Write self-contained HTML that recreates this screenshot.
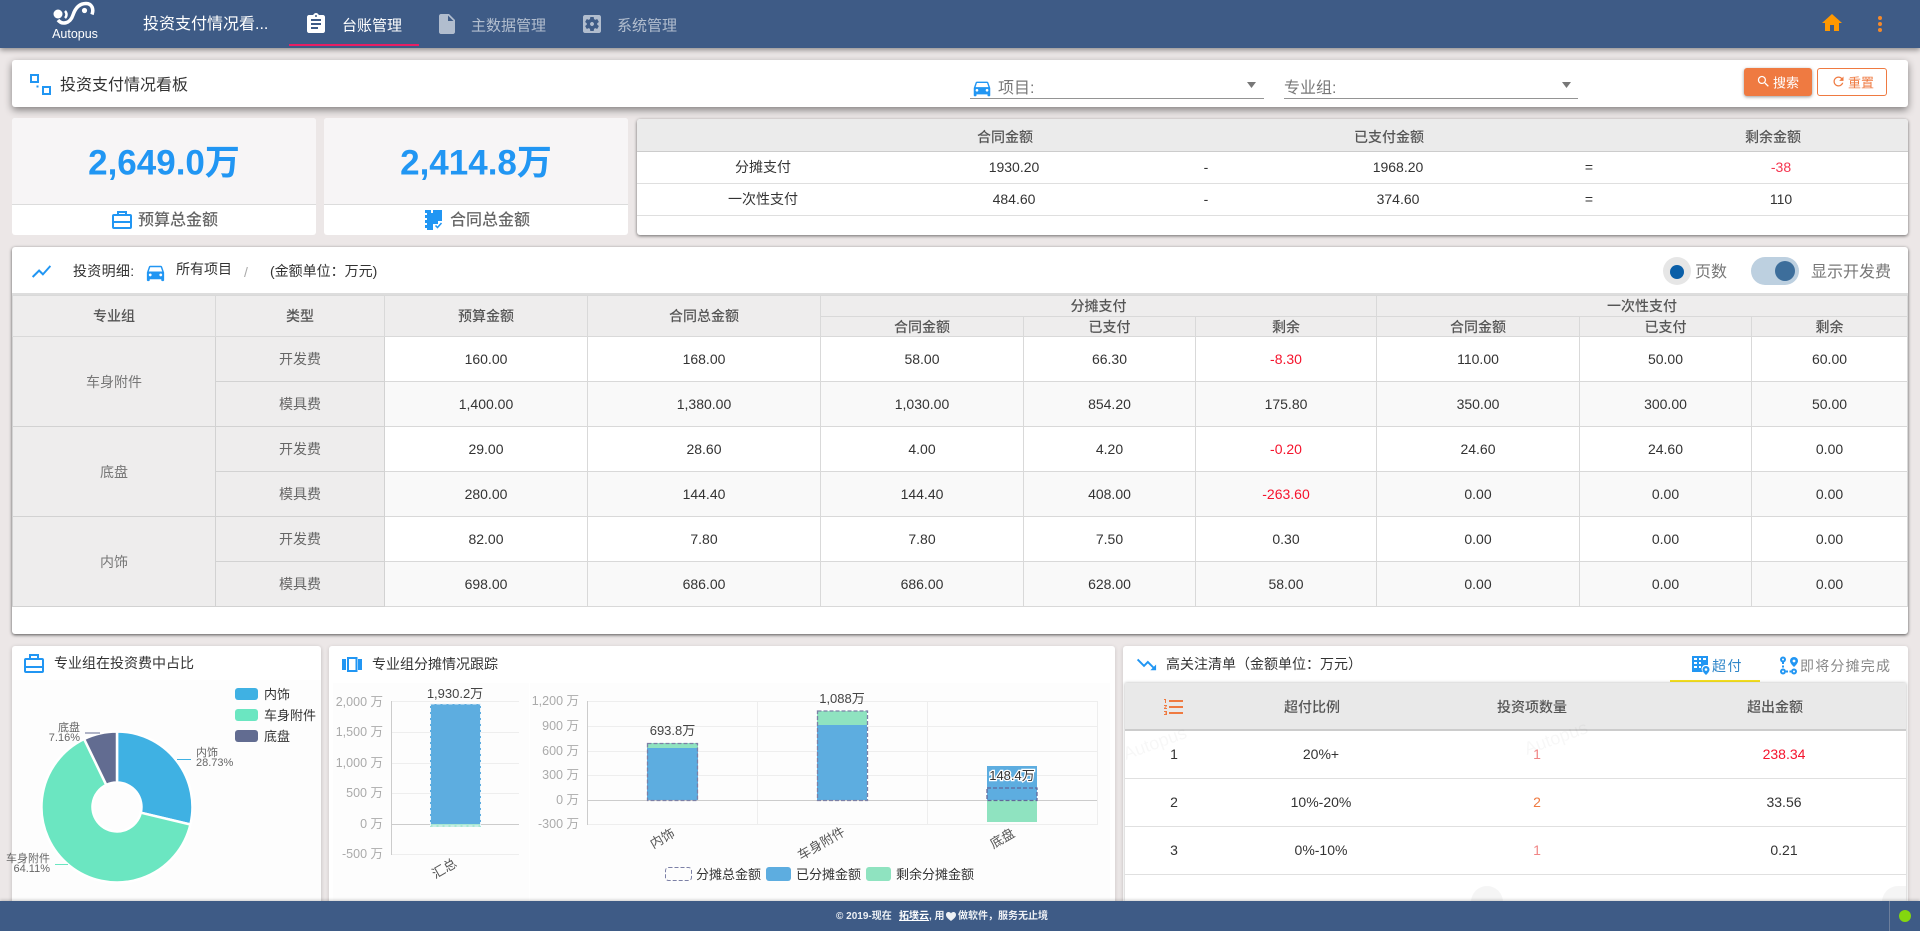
<!DOCTYPE html>
<html lang="zh-CN">
<head>
<meta charset="utf-8">
<title>投资支付情况看板</title>
<style>
*{box-sizing:border-box}
html,body{margin:0;padding:0;width:1920px;height:931px;overflow:hidden;background:#ece7e7;font-family:"Liberation Sans","Noto Sans CJK SC",sans-serif;font-size:14px;color:#333}
.a{position:absolute}
.c{position:absolute;white-space:nowrap;transform:translate(-50%,-50%);line-height:1}
.l{position:absolute;white-space:nowrap;transform:translateY(-50%);line-height:1}
.panel{position:absolute;background:#fff;border-radius:3px}
.h{font-weight:500;color:#555}
svg{position:absolute;display:block}
table{border-collapse:collapse;table-layout:fixed;position:absolute}
#m{left:12px;top:295px;width:1895px}
#m th,#m td{border:1px solid #d9d9d9;padding:0;text-align:center;font-size:14px;font-weight:400}
#m th{background:#eeeded;color:#555;font-weight:500;height:21px;line-height:14px}
#m tr.s th{height:20px}
#m td{color:#333;height:45px}
#m tr.e td{background:#f9f9f9}
#m td.g{background:#eeeded;color:#777;border-color:#d2d2d2}
#m tr.e td.g,#m td.g{background:#eeeded}
#m td.ty{background:#eeeded;color:#666;border-color:#d2d2d2}
#m tr.e td.ty{background:#eeeded}
#m td.r{color:#f5142d}
</style>
</head>
<body>

<!-- top bar -->
<div class="a" style="left:0;top:0;width:1920px;height:48px;background:#3e5b86;box-shadow:0 2px 5px rgba(0,0,0,.4);z-index:3">
  <svg style="left:45px;top:0" width="60" height="30" viewBox="0 0 60 30" fill="none">
    <circle cx="13" cy="14" r="4.500" fill="#fff"/>
    <path d="M20 11C22 13 22 16 20 18" stroke="#fff" stroke-width="2.500"/>
    <path d="M13 20C17 25 25 24 28 15C30 9 34 3.500 41 3.500C47 3.500 49 9 47 14.500" stroke="#fff" stroke-width="3.500"/>
    <circle cx="39.500" cy="10.500" r="2.600" fill="#fff"/>
  </svg>
  <div class="c" style="left:75px;top:34px;color:#fff;font-size:12.500px">Autopus</div>
  <div class="l" style="left:143px;top:25px;color:#fff;font-size:16px">投资支付情况看...</div>
  <svg style="left:304px;top:12px" width="24" height="24" viewBox="0 0 24 24" fill="#fff"><path d="M19 3h-4.180C14.400 1.840 13.300 1 12 1c-1.300 0-2.400.84-2.820 2H5c-1.100 0-2 .9-2 2v14c0 1.100.9 2 2 2h14c1.100 0 2-.9 2-2V5c0-1.100-.9-2-2-2zm-7 0c.55 0 1 .45 1 1s-.45 1-1 1-1-.45-1-1 .45-1 1-1zm2 14H7v-2h7v2zm3-4H7v-2h10v2zm0-4H7V7h10v2z"/></svg>
  <div class="l" style="left:342px;top:26px;color:#fff;font-size:15px">台账管理</div>
  <div class="a" style="left:289px;top:44px;width:130px;height:2px;background:#e91e63"></div>
  <svg style="left:435px;top:12px" width="24" height="24" viewBox="0 0 24 24" fill="#fff" fill-opacity=".6"><path d="M6 2c-1.100 0-1.990.9-1.990 2L4 20c0 1.100.89 2 1.990 2H18c1.100 0 2-.9 2-2V8l-6-6H6zm7 7V3.500L18.500 9H13z"/></svg>
  <div class="l" style="left:471px;top:26px;color:rgba(255,255,255,.6);font-size:15px">主数据管理</div>
  <svg style="left:580px;top:12px" width="24" height="24" viewBox="0 0 24 24" fill="#fff" fill-opacity=".6"><path d="M12 10c-1.100 0-2 .9-2 2s.9 2 2 2 2-.9 2-2-.9-2-2-2zm7-7H5c-1.110 0-2 .9-2 2v14c0 1.100.89 2 2 2h14c1.110 0 2-.9 2-2V5c0-1.100-.89-2-2-2zm-1.750 9c0 .23-.02.46-.05.68l1.480 1.160c.13.11.17.3.08.45l-1.400 2.420c-.09.15-.27.21-.43.15l-1.740-.7c-.36.28-.76.51-1.180.69l-.26 1.850c-.03.17-.18.3-.35.3h-2.800c-.17 0-.32-.13-.35-.29l-.26-1.850c-.43-.18-.82-.41-1.180-.69l-1.740.7c-.16.06-.34 0-.43-.15l-1.400-2.420c-.09-.15-.05-.34.08-.45l1.480-1.160c-.03-.23-.05-.46-.05-.69 0-.23.02-.46.05-.68l-1.480-1.160c-.13-.11-.17-.3-.08-.45l1.400-2.420c.09-.15.27-.21.43-.15l1.740.7c.36-.28.76-.51 1.180-.69l.26-1.850c.03-.17.18-.3.35-.3h2.800c.17 0 .32.13.35.29l.26 1.850c.43.18.82.41 1.180.69l1.740-.7c.16-.06.34 0 .43.15l1.400 2.420c.09.15.05.34-.08.45l-1.480 1.160c.03.23.05.46.05.69z"/></svg>
  <div class="l" style="left:617px;top:26px;color:rgba(255,255,255,.6);font-size:15px">系统管理</div>
  <svg style="left:1820px;top:11px" width="24" height="24" viewBox="0 0 24 24" fill="#ff9800"><path d="M10 20v-6h4v6h5v-8h3L12 3 2 12h3v8z"/></svg>
  <svg style="left:1874px;top:12px" width="12" height="24" viewBox="0 0 12 24" fill="#f5892a"><circle cx="6" cy="6" r="2"/><circle cx="6" cy="12" r="2"/><circle cx="6" cy="18" r="2"/></svg>
</div>

<!-- search panel -->
<div class="panel" style="left:12px;top:60px;width:1896px;height:47px;box-shadow:0 3px 8px rgba(0,0,0,.45)"></div>
<svg style="left:30px;top:74px" width="21" height="21" viewBox="0 0 21 21" fill="none" stroke="#2196f3" stroke-width="2"><rect x="1" y="1" width="7" height="7"/><rect x="13" y="13" width="7" height="7"/><rect x="6.500" y="11.500" width="2" height="2" fill="#2196f3" stroke="none"/></svg>
<div class="l" style="left:60px;top:86px;font-size:16px;color:#333">投资支付情况看板</div>

<svg style="left:971px;top:77px" width="22" height="22" viewBox="0 0 24 24" fill="#2196f3"><path d="M18.920 6.010C18.720 5.420 18.160 5 17.500 5h-11c-.66 0-1.210.42-1.420 1.010L3 12v8c0 .55.45 1 1 1h1c.55 0 1-.45 1-1v-1h12v1c0 .55.45 1 1 1h1c.55 0 1-.45 1-1v-8l-2.080-5.990zM6.500 16c-.83 0-1.500-.67-1.500-1.500S5.670 13 6.500 13s1.500.67 1.500 1.500S7.330 16 6.500 16zm11 0c-.83 0-1.500-.67-1.500-1.500s.67-1.500 1.500-1.500 1.500.67 1.500 1.500-.67 1.500-1.500 1.500zM5 11l1.500-4.500h11L19 11H5z"/></svg>
<div class="l" style="left:998px;top:89px;font-size:16px;color:#777">项目:</div>
<div class="a" style="left:970px;top:98px;width:294px;height:1px;background:#949494"></div>
<svg style="left:1247px;top:82px" width="9" height="6" viewBox="0 0 9 6" fill="#777"><path d="M0 0h9L4.500 6z"/></svg>
<div class="l" style="left:1284px;top:89px;font-size:16px;color:#777">专业组:</div>
<div class="a" style="left:1284px;top:98px;width:294px;height:1px;background:#949494"></div>
<svg style="left:1562px;top:82px" width="9" height="6" viewBox="0 0 9 6" fill="#777"><path d="M0 0h9L4.500 6z"/></svg>

<div class="a" style="left:1744px;top:68px;width:68px;height:28px;background:#ef7a41;border-radius:3px;box-shadow:0 1px 3px rgba(0,0,0,.4)"></div>
<svg style="left:1756px;top:74px" width="15" height="15" viewBox="0 0 24 24" fill="#fff"><path d="M15.500 14h-.79l-.28-.27C15.410 12.590 16 11.110 16 9.500 16 5.910 13.090 3 9.500 3S3 5.910 3 9.500 5.910 16 9.500 16c1.610 0 3.090-.59 4.230-1.570l.27.28v.79l5 4.990L20.490 19l-4.990-5zm-6 0C7.010 14 5 11.990 5 9.500S7.010 5 9.500 5 14 7.010 14 9.500 11.990 14 9.500 14z"/></svg>
<div class="l" style="left:1773px;top:83px;font-size:13px;color:#fff">搜索</div>
<div class="a" style="left:1817px;top:68px;width:70px;height:28px;background:#fff;border:1px solid #ef7a41;border-radius:3px"></div>
<svg style="left:1831px;top:74px" width="15" height="15" viewBox="0 0 24 24" fill="#ef7a41"><path d="M17.650 6.350C16.200 4.900 14.210 4 12 4c-4.420 0-7.990 3.580-7.990 8s3.570 8 7.990 8c3.730 0 6.840-2.550 7.730-6h-2.080c-.82 2.330-3.040 4-5.650 4-3.310 0-6-2.690-6-6s2.690-6 6-6c1.660 0 3.140.69 4.220 1.780L13 11h7V4l-2.350 2.350z"/></svg>
<div class="l" style="left:1848px;top:83px;font-size:13px;color:#ef7a41">重置</div>

<!-- stat cards -->
<div class="panel" style="left:12px;top:118px;width:304px;height:117px;background:#fff;overflow:hidden"><div style="height:87px;background:#f7f5f6;border-bottom:1px solid #dcdcdc"></div></div>
<div class="c" style="left:164px;top:163px;font-size:35px;font-weight:700;color:#2196f3">2,649.0万</div>
<svg style="left:111px;top:210px" width="22" height="19" viewBox="0 0 22 19" fill="none" stroke="#2196f3" stroke-width="2"><rect x="2" y="5" width="18" height="13" rx="1"/><path d="M7 5V2h8v3M2 12h18"/></svg>
<div class="l h" style="left:138px;top:221px;font-size:16px;color:#666">预算总金额</div>

<div class="panel" style="left:324px;top:118px;width:304px;height:117px;background:#fff;overflow:hidden"><div style="height:87px;background:#f7f5f6;border-bottom:1px solid #dcdcdc"></div></div>
<div class="c" style="left:476px;top:163px;font-size:35px;font-weight:700;color:#2196f3">2,414.8万</div>
<svg style="left:424px;top:210px" width="21" height="20" viewBox="0 0 21 20" fill="#2196f3"><path d="M3 0h4v3h2V0h9v11h-4v3H9v6H3v-2H1v-3h2v-2H1v-3h2V8H1V5h2V3H1V0z"/><path d="M11.500 15.500l2 2 4-4.500" stroke="#2196f3" stroke-width="1.500" fill="none"/></svg>
<div class="l h" style="left:450px;top:221px;font-size:16px;color:#666">合同总金额</div>

<!-- summary table -->
<div class="panel" style="left:637px;top:119px;width:1271px;height:116px;box-shadow:0 1px 3px rgba(0,0,0,.55);overflow:hidden">
  <div class="a" style="left:0;top:0;width:100%;height:33px;background:#ebebeb;border-bottom:1px solid #ccc"></div>
  <div class="a" style="left:0;top:64px;width:100%;height:1px;background:#dfdfdf"></div>
  <div class="a" style="left:0;top:96px;width:100%;height:1px;background:#dfdfdf"></div>
</div>
<div class="c h" style="left:1005px;top:137px">合同金额</div>
<div class="c h" style="left:1389px;top:137px">已支付金额</div>
<div class="c h" style="left:1773px;top:137px">剩余金额</div>
<div class="c" style="left:763px;top:167px">分摊支付</div>
<div class="c" style="left:1014px;top:167px">1930.20</div>
<div class="c" style="left:1206px;top:167px">-</div>
<div class="c" style="left:1398px;top:167px">1968.20</div>
<div class="c" style="left:1589px;top:167px">=</div>
<div class="c" style="left:1781px;top:167px;color:#f5344f">-38</div>
<div class="c" style="left:763px;top:199px">一次性支付</div>
<div class="c" style="left:1014px;top:199px">484.60</div>
<div class="c" style="left:1206px;top:199px">-</div>
<div class="c" style="left:1398px;top:199px">374.60</div>
<div class="c" style="left:1589px;top:199px">=</div>
<div class="c" style="left:1781px;top:199px">110</div>

<!-- main panel -->
<div class="panel" style="left:12px;top:247px;width:1896px;height:387px;box-shadow:0 1px 3px rgba(0,0,0,.65)"></div>
<div class="a" style="left:12px;top:293px;width:1896px;height:2px;background:#ddd"></div>
<svg style="left:30px;top:260px" width="23" height="23" viewBox="0 0 24 24" fill="#2196f3"><path d="M3.500 18.490l6-6.010 4 4L22 6.920l-1.410-1.410-7.090 7.970-4-4L2 16.990z"/></svg>
<div class="l" style="left:73px;top:271px;letter-spacing:.3px">投资明细:</div>
<svg style="left:144px;top:261px" width="23" height="23" viewBox="0 0 24 24" fill="#2196f3"><path d="M18.920 6.010C18.720 5.420 18.160 5 17.500 5h-11c-.66 0-1.210.42-1.420 1.010L3 12v8c0 .55.45 1 1 1h1c.55 0 1-.45 1-1v-1h12v1c0 .55.45 1 1 1h1c.55 0 1-.45 1-1v-8l-2.080-5.990zM6.500 16c-.83 0-1.500-.67-1.500-1.500S5.670 13 6.500 13s1.500.67 1.500 1.500S7.330 16 6.500 16zm11 0c-.83 0-1.500-.67-1.500-1.500s.67-1.500 1.500-1.500 1.500.67 1.500 1.500-.67 1.500-1.500 1.500zM5 11l1.500-4.500h11L19 11H5z"/></svg>
<div class="l" style="left:176px;top:269px">所有项目</div>
<div class="l" style="left:244px;top:272px;color:#aaa">/</div>
<div class="l" style="left:270px;top:271px">(金额单位：万元)</div>
<div class="a" style="left:1663px;top:257px;width:28px;height:28px;border-radius:50%;background:#e6e6e6"></div>
<div class="a" style="left:1670px;top:265px;width:14px;height:14px;border-radius:50%;background:#0a5fa8"></div>
<div class="l" style="left:1695px;top:273px;font-size:16px;color:#777">页数</div>
<div class="a" style="left:1751px;top:257px;width:48px;height:28px;border-radius:14px;background:#bdd0e0"></div>
<div class="a" style="left:1775px;top:261px;width:20px;height:20px;border-radius:50%;background:#3d6e9b"></div>
<div class="l" style="left:1811px;top:273px;font-size:16px;color:#777">显示开发费</div>

<table id="m">
<colgroup><col style="width:203px"><col style="width:169px"><col style="width:203px"><col style="width:233px"><col style="width:203px"><col style="width:172px"><col style="width:181px"><col style="width:203px"><col style="width:172px"><col style="width:156px"></colgroup>
<tr><th rowspan="2">专业组</th><th rowspan="2">类型</th><th rowspan="2">预算金额</th><th rowspan="2">合同总金额</th><th colspan="3">分摊支付</th><th colspan="3">一次性支付</th></tr>
<tr class="s"><th>合同金额</th><th>已支付</th><th>剩余</th><th>合同金额</th><th>已支付</th><th>剩余</th></tr>
<tr><td class="g" rowspan="2">车身附件</td><td class="ty">开发费</td><td>160.00</td><td>168.00</td><td>58.00</td><td>66.30</td><td class="r">-8.30</td><td>110.00</td><td>50.00</td><td>60.00</td></tr>
<tr class="e"><td class="ty">模具费</td><td>1,400.00</td><td>1,380.00</td><td>1,030.00</td><td>854.20</td><td>175.80</td><td>350.00</td><td>300.00</td><td>50.00</td></tr>
<tr><td class="g" rowspan="2">底盘</td><td class="ty">开发费</td><td>29.00</td><td>28.60</td><td>4.00</td><td>4.20</td><td class="r">-0.20</td><td>24.60</td><td>24.60</td><td>0.00</td></tr>
<tr class="e"><td class="ty">模具费</td><td>280.00</td><td>144.40</td><td>144.40</td><td>408.00</td><td class="r">-263.60</td><td>0.00</td><td>0.00</td><td>0.00</td></tr>
<tr><td class="g" rowspan="2">内饰</td><td class="ty">开发费</td><td>82.00</td><td>7.80</td><td>7.80</td><td>7.50</td><td>0.30</td><td>0.00</td><td>0.00</td><td>0.00</td></tr>
<tr class="e"><td class="ty" style="height:45px">模具费</td><td>698.00</td><td>686.00</td><td>686.00</td><td>628.00</td><td>58.00</td><td>0.00</td><td>0.00</td><td>0.00</td></tr>
</table>

<!-- bottom panels -->
<div class="panel" style="left:12px;top:646px;width:309px;height:270px;box-shadow:0 1px 4px rgba(0,0,0,.2)"></div>
<div class="panel" style="left:329px;top:646px;width:786px;height:270px;box-shadow:0 1px 4px rgba(0,0,0,.15)"></div>
<div class="panel" style="left:1123px;top:646px;width:785px;height:270px;box-shadow:0 1px 4px rgba(0,0,0,.15)"></div>

<div class="a" style="left:12px;top:680px;width:309px;height:221px;background:#fdfdfd"></div>
<div class="a" style="left:333px;top:683px;width:196px;height:218px;background:#fdfdfd"></div>
<div class="a" style="left:530px;top:683px;width:580px;height:218px;background:#fdfdfd"></div>

<svg style="left:23px;top:653px" width="22" height="20" viewBox="0 0 22 20" fill="none" stroke="#2196f3" stroke-width="2"><rect x="2" y="6" width="18" height="13" rx="1"/><path d="M7 6V2h8v4M2 14h18"/></svg>
<div class="l" style="left:54px;top:663px;color:#333">专业组在投资费中占比</div>

<svg style="left:342px;top:657px" width="20" height="15" viewBox="0 0 20 15" fill="#2196f3"><rect x="0" y="2" width="4" height="11"/><rect x="16" y="2" width="4" height="11"/><rect x="6" y="1" width="8.500" height="13" fill="none" stroke="#2196f3" stroke-width="2"/></svg>
<div class="l" style="left:372px;top:664px;color:#333">专业组分摊情况跟踪</div>

<svg style="left:0;top:0" width="1920" height="931" viewBox="0 0 1920 931" font-family="'Liberation Sans','Noto Sans CJK SC',sans-serif">
  <!-- pie -->
  <g stroke="#fff" stroke-width="2.500" stroke-linejoin="round">
    <path fill="#3fb1e3" d="M117 731.500A75.500 75.500 0 0 1 190.400 824.500L140.800 812.700A24.500 24.500 0 0 0 117 782.500Z"/>
    <path fill="#6be6c1" d="M190.400 824.500A75.500 75.500 0 1 1 84.100 739L106.300 784.900A24.500 24.500 0 1 0 140.800 812.700Z"/>
    <path fill="#626c91" d="M84.100 739A75.500 75.500 0 0 1 117 731.500L117 782.500A24.500 24.500 0 0 0 106.300 784.900Z"/>
  </g>
  <path d="M177 759.500h14" stroke="#3fb1e3"/>
  <path d="M85 733h15" stroke="#626c91"/>
  <path d="M55 864.500h13" stroke="#6be6c1"/>
  <g font-size="11" fill="#666">
    <text x="196" y="756">内饰</text><text x="196" y="766">28.73%</text>
    <text x="80" y="731" text-anchor="end">底盘</text><text x="80" y="741" text-anchor="end">7.16%</text>
    <text x="50" y="862" text-anchor="end">车身附件</text><text x="50" y="872" text-anchor="end">64.11%</text>
  </g>
  <rect x="235" y="688" width="23" height="12" rx="3" fill="#3fb1e3"/>
  <rect x="235" y="709" width="23" height="12" rx="3" fill="#6be6c1"/>
  <rect x="235" y="730" width="23" height="12" rx="3" fill="#626c91"/>
  <g font-size="13" fill="#333">
    <text x="264" y="699">内饰</text><text x="264" y="720">车身附件</text><text x="264" y="741">底盘</text>
  </g>

  <!-- left bar chart -->
  <g stroke="#eee" fill="none">
    <path d="M391 701.500h128M391 732.500h128M391 763.500h128M391 793.500h128M391 854.500h128"/>
  </g>
  <path d="M391.500 701v154M391 824.500h128" stroke="#ccc" fill="none"/>
  <g font-size="12.500" fill="#aaa" text-anchor="end">
    <text x="383" y="706">2,000 万</text><text x="383" y="736">1,500 万</text><text x="383" y="767">1,000 万</text><text x="383" y="797">500 万</text><text x="383" y="828">0 万</text><text x="383" y="858">-500 万</text>
  </g>
  <rect x="430" y="704" width="51" height="120" fill="#5dade0"/>
  <rect x="430" y="824" width="51" height="3" fill="#a8e8d2"/>
  <rect x="430.500" y="704" width="50" height="122" fill="none" stroke="#e8f3fb" stroke-dasharray="4 2"/>
  <text x="455" y="698" text-anchor="middle" font-size="13" fill="#444">1,930.2万</text>
  <text x="444" y="873" text-anchor="middle" font-size="13" fill="#555" transform="rotate(-30 444 868)">汇总</text>

  <!-- right bar chart -->
  <path d="M587 701.500h510M587 726.500h510M587 751.500h510M587 775.500h510M587 824.500h510M757.500 701v124M927.500 701v124M1097.500 701v124" stroke="#eee" fill="none"/>
  <path d="M587.500 701v124M587 800.500h510" stroke="#ccc" fill="none"/>
  <g font-size="12.500" fill="#aaa" text-anchor="end">
    <text x="579" y="705">1,200 万</text><text x="579" y="730">900 万</text><text x="579" y="755">600 万</text><text x="579" y="779">300 万</text><text x="579" y="804">0 万</text><text x="579" y="828">-300 万</text>
  </g>
  <rect x="647" y="748" width="51" height="52" fill="#5dade0"/>
  <rect x="647" y="743" width="51" height="5" fill="#8fe3c0"/>
  <rect x="647.500" y="743.500" width="50" height="57" fill="none" stroke="#7c80a6" stroke-width="1.300" stroke-dasharray="4 2"/>
  <text x="672.500" y="735" text-anchor="middle" font-size="13" fill="#444">693.8万</text>
  <rect x="817" y="725" width="50" height="75" fill="#5dade0"/>
  <rect x="817" y="711" width="50" height="14" fill="#8fe3c0"/>
  <rect x="817.500" y="711" width="50" height="89.500" fill="none" stroke="#7c80a6" stroke-width="1.300" stroke-dasharray="4 2"/>
  <text x="842" y="703" text-anchor="middle" font-size="13" fill="#444">1,088万</text>
  <rect x="987" y="766" width="50" height="34" fill="#5dade0"/>
  <rect x="987" y="800" width="50" height="22" fill="#8fe3c0"/>
  <rect x="987" y="788" width="50" height="12.500" fill="none" stroke="#62679a" stroke-width="1.300" stroke-dasharray="4 2"/>
  <text x="1012" y="780" text-anchor="middle" font-size="13" fill="#333" stroke="#fff" stroke-width="2.500" paint-order="stroke">148.4万</text>
  <g font-size="13" fill="#555" text-anchor="middle">
    <text x="662" y="843" transform="rotate(-30 662 838)">内饰</text>
    <text x="821" y="848" transform="rotate(-30 821 843)">车身附件</text>
    <text x="1002" y="843" transform="rotate(-30 1002 838)">底盘</text>
  </g>
  <rect x="665.500" y="867.500" width="26" height="13" rx="3" fill="none" stroke="#7c80a6" stroke-dasharray="4 2"/>
  <rect x="766" y="867" width="25" height="14" rx="3" fill="#5dade0"/>
  <rect x="866" y="867" width="25" height="14" rx="3" fill="#8fe3c0"/>
  <g font-size="13" fill="#333">
    <text x="696" y="879">分摊总金额</text><text x="796" y="879">已分摊金额</text><text x="896" y="879">剩余分摊金额</text>
  </g>
</svg>

<!-- high attention -->
<svg style="left:1135px;top:653px" width="23" height="23" viewBox="0 0 24 24" fill="#2196f3"><path d="M16 18l2.290-2.290-4.880-4.880-4 4L2 7.410 3.410 6l6 6 4-4 6.300 6.290L22 12v6z"/></svg>
<div class="l" style="left:1166px;top:664px;color:#333">高关注清单（金额单位：万元）</div>
<svg style="left:1692px;top:656px" width="19" height="19" viewBox="0 0 19 19" fill="#2196f3"><path d="M0 0h16v9h-2a4 4 0 0 0-3 7H0zM2 2v2h3V2zm5 0v2h2V2zm4 0v2h3V2zM2 6v2h3V6zm5 0v2h2V6zM2 10v2h3v-2zm5 0v2h2v-2z" fill-rule="evenodd"/><path d="M14 10a3.500 3.500 0 0 1 3.500 3.500C17.500 16 14 19 14 19s-3.500-3-3.500-5.500A3.500 3.500 0 0 1 14 10z"/><circle cx="14" cy="13.500" r="1.300" fill="#fff"/></svg>
<div class="l" style="left:1712px;top:666px;color:#2f86c9;letter-spacing:1.500px">超付</div>
<div class="a" style="left:1670px;top:680px;width:90px;height:2px;background:#f5e020"></div>
<svg style="left:1779px;top:656px" width="20" height="19" viewBox="0 0 20 19" fill="none" stroke="#2196f3" stroke-width="2"><circle cx="4" cy="3.500" r="2"/><circle cx="4" cy="15.500" r="2"/><circle cx="15" cy="15.500" r="2"/><path d="M4 6v7M7 15.500h5" stroke-dasharray="2 1.500"/><path d="M15 1a4 4 0 0 1 4 4c0 2.500-4 6-4 6s-4-3.500-4-6a4 4 0 0 1 4-4z" fill="#2196f3" stroke="none"/><circle cx="15" cy="5" r="1.400" fill="#fff" stroke="none"/></svg>
<div class="l" style="left:1800px;top:666px;color:#888;letter-spacing:1.200px">即将分摊完成</div>

<div class="a" style="left:1125px;top:683px;width:781px;height:218px;background:#fff;box-shadow:0 0 3px rgba(0,0,0,.3)">
  <div class="a" style="left:0;top:0;width:781px;height:48px;background:#e9e9e9;border-bottom:2px solid #ccc"></div>
  <div class="a" style="left:0;top:95px;width:781px;height:1px;background:#e0e0e0"></div>
  <div class="a" style="left:0;top:143px;width:781px;height:1px;background:#e0e0e0"></div>
  <div class="a" style="left:0;top:191px;width:781px;height:1px;background:#e0e0e0"></div>
</div>
<div class="a" style="left:1122px;top:733px;font-size:18px;color:rgba(0,0,0,.03);transform:rotate(-20deg);white-space:nowrap">Autopus</div>
<div class="a" style="left:1523px;top:728px;font-size:18px;color:rgba(0,0,0,.03);transform:rotate(-20deg);white-space:nowrap">Autopus</div>
<div class="a" style="left:1471px;top:886px;width:32px;height:32px;border-radius:50%;background:rgba(0,0,0,.04)"></div>
<div class="a" style="left:1882px;top:886px;width:24px;height:32px;border-radius:16px 0 0 16px;background:rgba(0,0,0,.04)"></div>
<svg style="left:1162px;top:695px" width="24" height="24" viewBox="0 0 24 24" fill="#ef7a41"><path d="M2 17h2v.5H3v1h1v.5H2v1h3v-4H2v1zm1-9h1V4H2v1h1v3zm-1 3h1.800L2 13.100v.9h3v-1H3.200L5 10.900V10H2v1zm5-6v2h14V5H7zm0 14h14v-2H7v2zm0-6h14v-2H7v2z"/></svg>
<div class="c h" style="left:1312px;top:707px">超付比例</div>
<div class="c h" style="left:1532px;top:707px">投资项数量</div>
<div class="c h" style="left:1775px;top:707px">超出金额</div>
<div class="c" style="left:1174px;top:754px">1</div>
<div class="c" style="left:1321px;top:754px">20%+</div>
<div class="c" style="left:1537px;top:754px;color:#f08585">1</div>
<div class="c" style="left:1784px;top:754px;color:#f5142d">238.34</div>
<div class="c" style="left:1174px;top:802px">2</div>
<div class="c" style="left:1321px;top:802px">10%-20%</div>
<div class="c" style="left:1537px;top:802px;color:#ef7a41">2</div>
<div class="c" style="left:1784px;top:802px">33.56</div>
<div class="c" style="left:1174px;top:850px">3</div>
<div class="c" style="left:1321px;top:850px">0%-10%</div>
<div class="c" style="left:1537px;top:850px;color:#f08585">1</div>
<div class="c" style="left:1784px;top:850px">0.21</div>

<!-- footer -->
<div class="a" style="left:0;top:901px;width:1920px;height:30px;background:#3e5b86;box-shadow:0 -1px 3px rgba(0,0,0,.2)"></div>
<div class="l" style="left:836px;top:917px;font-size:10px;font-weight:700;color:#eef1f5">© 2019-现在</div>
<div class="l" style="left:899px;top:917px;font-size:10px;font-weight:700;color:#fff;text-decoration:underline">拓墣云</div>
<div class="l" style="left:929px;top:917px;font-size:10px;font-weight:700;color:#eef1f5">, 用</div>
<svg style="left:946px;top:912px" width="10" height="9" viewBox="0 0 10 9" fill="#eef1f5"><path d="M5 9C2 6.500 0 5 0 2.700 0 1 1.200 0 2.600 0 3.600 0 4.500.5 5 1.400 5.500.5 6.400 0 7.400 0 8.800 0 10 1 10 2.700 10 5 8 6.500 5 9z"/></svg>
<div class="l" style="left:958px;top:917px;font-size:10px;font-weight:700;color:#eef1f5">做软件，服务无止境</div>
<div class="a" style="left:1889px;top:901px;width:1px;height:30px;background:#6d7f9c"></div>
<div class="a" style="left:1899px;top:910px;width:12px;height:12px;border-radius:50%;background:#84d70f"></div>

</body>
</html>
